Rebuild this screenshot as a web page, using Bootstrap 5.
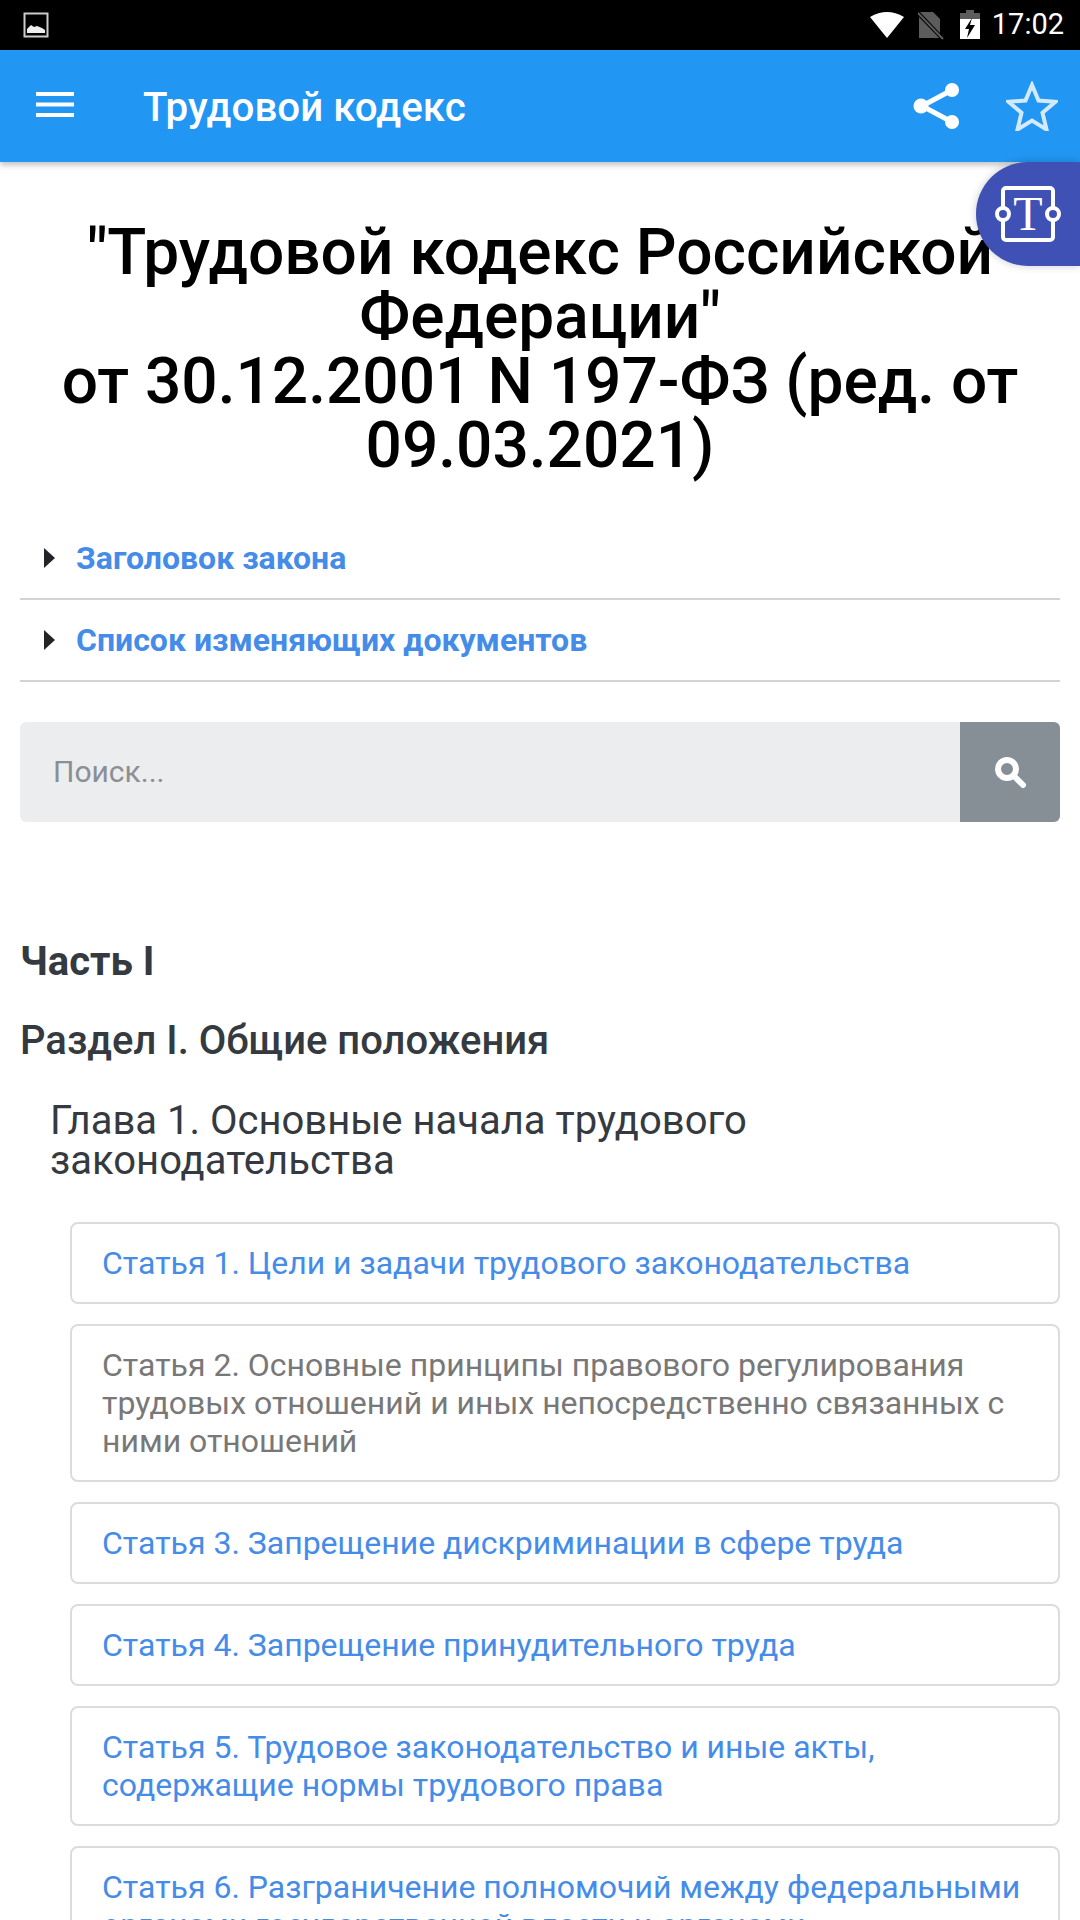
<!DOCTYPE html>
<html lang="ru">
<head>
    <meta charset="UTF-8">
    <meta name="viewport" content="width=device-width, initial-scale=1.0">
    <title>Трудовой кодекс</title>
    <link rel="stylesheet" href="https://cdn.jsdelivr.net/npm/bootstrap@5.3.0/dist/css/bootstrap.min.css">
    <script src="https://cdn.jsdelivr.net/npm/bootstrap@5.3.3/dist/js/bootstrap.bundle.min.js"></script>
    <style>
        html, body {
            height: 1920px;
            overflow: hidden;
        }

        body {
            font-family: Roboto, "Liberation Sans", sans-serif;
            background: #fff;
        }

        .status-strip {
            height: 50px;
            background: #000;
            color: #fff;
            padding: 0 16px 0 23px;
            font-size: 29px;
        }

        .sim-icon {
            margin-left: 14px;
            margin-right: 16px;
        }

        .clock-text {
            margin-left: 12px;
        }

        .top-bar {
            height: 112px;
            background: #2196f3;
            color: #fff;
            box-shadow: 0 3px 6px rgba(0, 0, 0, 0.25);
            position: relative;
            z-index: 2;
            padding: 0 22px 0 36px;
        }

        .top-title {
            font-size: 40.3px;
            font-weight: 500;
            margin-left: 69px;
            line-height: 1;
            padding-top: 5px;
        }

        .share-icon {
            margin-right: 45px;
        }

        .font-tab {
            position: absolute;
            top: 162px;
            right: 0;
            width: 104px;
            height: 104px;
            background: #3f51b5;
            border-radius: 52px 0 0 52px;
            box-shadow: 0 0 8px rgba(0, 0, 0, 0.2);
            z-index: 3;
        }

        .font-tab-letter {
            font-family: "Liberation Serif", serif;
            font-size: 48px;
            fill: #fff;
        }

        .law-title {
            font-size: 64px;
            line-height: 64.4px;
            font-weight: 500;
            color: #000;
            text-align: center;
            margin: 59px 20px 0;
        }

        .fold-row {
            height: 82px;
            margin: 0 20px;
            border-bottom: 2px solid #d3d3d3;
            padding-left: 24px;
            font-size: 32px;
            font-weight: 700;
            color: #458ce8;
        }

        .fold-first {
            margin-top: 39px;
        }

        .fold-arrow {
            width: 0;
            height: 0;
            border-top: 10px solid transparent;
            border-bottom: 10px solid transparent;
            border-left: 11px solid #212529;
            margin-right: 21px;
        }

        .search-box {
            margin: 40px 20px 0;
            width: auto;
            height: 100px;
            border-radius: 6px;
            overflow: hidden;
        }

        .search-box .form-control {
            background: #ecedef;
            border: 0;
            border-radius: 0;
            font-size: 30px;
            padding-left: 33px;
            box-shadow: none;
        }

        .search-box .form-control::placeholder {
            color: #8b8f93;
        }

        .search-box .btn {
            width: 100px;
            background: #868e96;
            border: 0;
            border-radius: 0;
        }

        .part-head {
            font-size: 40px;
            font-weight: 700;
            color: #343a40;
            margin: 116px 20px 0;
            line-height: 48px;
        }

        .section-head {
            font-size: 40px;
            font-weight: 500;
            color: #343a40;
            margin: 31px 20px 0;
            line-height: 48px;
        }

        .chapter-head {
            font-size: 40px;
            font-weight: 400;
            color: #343a40;
            margin: 36px 50px 0;
            line-height: 40px;
        }

        .article-list {
            margin: 41px 20px 0 70px;
        }

        .article-item {
            display: block;
            border: 2px solid #dcdcdc;
            border-radius: 8px;
            padding: 20px 30px;
            font-size: 32px;
            line-height: 38px;
            color: #458ce8;
            text-decoration: none;
            margin-bottom: 20px;
        }

        .article-read {
            color: #787878;
        }
    </style>
</head>
<body>
    <!-- Status bar -->
    <div class="status-strip d-flex align-items-center justify-content-between">
        <svg width="26" height="26" viewBox="0 0 26 26">
            <rect x="1.5" y="1.5" width="23" height="23" fill="none" stroke="#ccc" stroke-width="2"/>
            <path d="M4 21v-4l4-4 3 2 3-1 5 2 3 2v3z" fill="#eee"/>
        </svg>
        <div class="d-flex align-items-center">
            <svg width="34" height="30" viewBox="0 0 34 30"><path d="M0 7Q17 -3 34 7L17 28z" fill="#fff"/></svg>
            <svg class="sim-icon" width="26" height="30" viewBox="0 0 26 30">
                <path d="M1 2h14l7 7v19H1z" fill="#5c5c5c"/>
                <path d="M0 3l25 26" stroke="#000" stroke-width="4"/>
                <path d="M0 3l25 26" stroke="#5c5c5c" stroke-width="2"/>
            </svg>
            <svg width="20" height="30" viewBox="0 0 20 30">
                <path d="M6 0h8v3h6v8H0V3h6z" fill="#5c5c5c"/>
                <path d="M0 9h20v20H0z" fill="#fff"/>
                <path d="M12 8l-7 11h4l-2 9 8-13h-5z" fill="#000"/>
            </svg>
            <span class="clock-text">17:02</span>
        </div>
    </div>

    <!-- Toolbar -->
    <div class="top-bar d-flex align-items-center">
        <svg width="38" height="28" viewBox="0 0 38 28"><path d="M0 2h38M0 12.500h38M0 23h38" stroke="#fff" stroke-width="4"/></svg>
        <div class="top-title flex-grow-1">Трудовой кодекс</div>
        <svg class="share-icon" width="48" height="50" viewBox="0 0 48 50">
            <path d="M39 9L9 25l30 16" fill="none" stroke="#fff" stroke-width="5"/>
            <circle cx="39" cy="9" r="7" fill="#fff"/>
            <circle cx="8" cy="25" r="7.500" fill="#fff"/>
            <circle cx="39" cy="41" r="7" fill="#fff"/>
        </svg>
        <svg width="52" height="50" viewBox="0 0 52 50">
            <path d="M26 4l6.500 15.500 17 1.300-13 11 4 16.700L26 39.500 11.500 48.500l4-16.700-13-11 17-1.300z" fill="none" stroke="#d3eafd" stroke-width="4"/>
        </svg>
    </div>

    <!-- Font size tab -->
    <div class="font-tab d-flex align-items-center justify-content-center">
        <svg width="66" height="58" viewBox="0 0 66 58">
            <rect x="8" y="3" width="50" height="52" rx="3" fill="none" stroke="#fff" stroke-width="4"/>
            <circle cx="8" cy="29" r="6" fill="#3f51b5" stroke="#fff" stroke-width="4"/>
            <circle cx="58" cy="29" r="6" fill="#3f51b5" stroke="#fff" stroke-width="4"/>
            <text x="33" y="45" text-anchor="middle" class="font-tab-letter">T</text>
        </svg>
    </div>

    <h1 class="law-title">"Трудовой кодекс Российской Федерации"<br>от 30.12.2001 N 197-ФЗ (ред. от 09.03.2021)</h1>

    <div class="fold-row fold-first d-flex align-items-center"><span class="fold-arrow"></span>Заголовок закона</div>
    <div class="fold-row d-flex align-items-center"><span class="fold-arrow"></span>Список изменяющих документов</div>

    <div class="search-box input-group">
        <input type="text" class="form-control" placeholder="Поиск...">
        <button class="btn d-flex align-items-center justify-content-center" type="button">
            <svg width="32" height="32" viewBox="0 0 32 32">
                <circle cx="13" cy="13" r="9" fill="none" stroke="#fff" stroke-width="6"/>
                <path d="M20 20l9 9" stroke="#fff" stroke-width="6" stroke-linecap="round"/>
            </svg>
        </button>
    </div>

    <div class="part-head">Часть I</div>
    <div class="section-head">Раздел I. Общие положения</div>
    <div class="chapter-head">Глава 1. Основные начала трудового законодательства</div>

    <div class="article-list">
        <a class="article-item" href="#">Статья 1. Цели и задачи трудового законодательства</a>
        <a class="article-item article-read" href="#">Статья 2. Основные принципы правового регулирования трудовых отношений и иных непосредственно связанных с ними отношений</a>
        <a class="article-item" href="#">Статья 3. Запрещение дискриминации в сфере труда</a>
        <a class="article-item" href="#">Статья 4. Запрещение принудительного труда</a>
        <a class="article-item" href="#">Статья 5. Трудовое законодательство и иные акты, содержащие нормы трудового права</a>
        <a class="article-item" href="#">Статья 6. Разграничение полномочий между федеральными органами государственной власти и органами</a>
    </div>
</body>
</html>
